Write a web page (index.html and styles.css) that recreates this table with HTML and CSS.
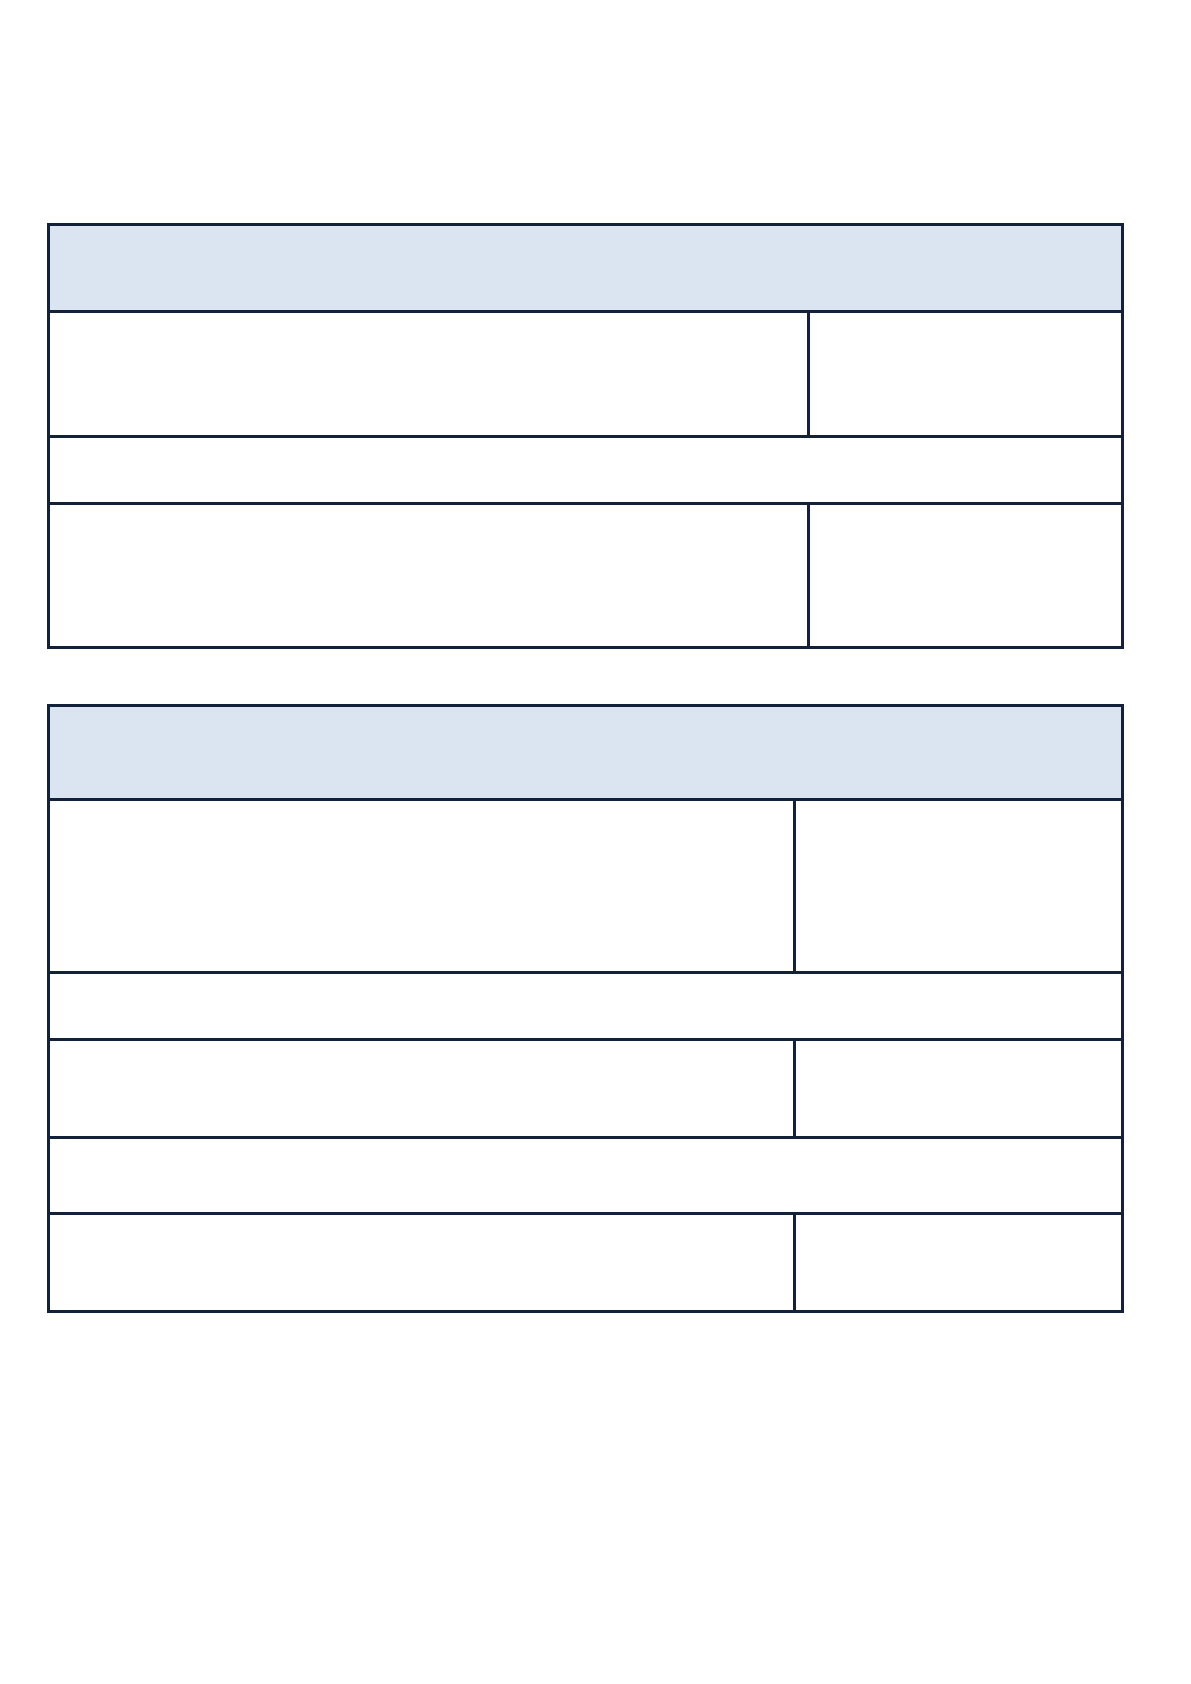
FILE: index.html
```html
<!DOCTYPE html>
<html lang="en">
<head>
<meta charset="utf-8">
<title>Form</title>
<link rel="stylesheet" href="styles.css">
</head>
<body>
<main class="page">
  <section class="sheet sheet-one">
    <div class="cell head span"></div>
    <div class="cell r1"></div>
    <div class="cell r1"></div>
    <div class="cell span r2"></div>
    <div class="cell r3"></div>
    <div class="cell r3"></div>
  </section>
  <section class="sheet sheet-two">
    <div class="cell head span"></div>
    <div class="cell"></div>
    <div class="cell"></div>
    <div class="cell span"></div>
    <div class="cell"></div>
    <div class="cell"></div>
    <div class="cell span"></div>
    <div class="cell"></div>
    <div class="cell"></div>
  </section>
</main>
</body>
</html>
```
FILE: styles.css
```css
html, body {
  margin: 0;
  padding: 0;
  background: #ffffff;
  font-family: "Liberation Sans", Arial, sans-serif;
}
.page {
  padding: 223px 0 0 47px;
  display: flex;
  flex-direction: column;
  gap: 55px;
}
.sheet {
  display: grid;
  width: 1071px;
  padding: 3px;
  gap: 3px;
  background: #13223a;
}
.sheet-one {
  grid-template-columns: 757px 311px;
  grid-template-rows: 84px 122px 64px 141px;
}
.sheet-two {
  grid-template-columns: 743px 325px;
  grid-template-rows: 91px 170px 64px 95px 73px 95px;
}
.cell {
  background: #ffffff;
}
.span {
  grid-column: 1 / -1;
}
.head {
  background: #dbe5f1;
}
```
